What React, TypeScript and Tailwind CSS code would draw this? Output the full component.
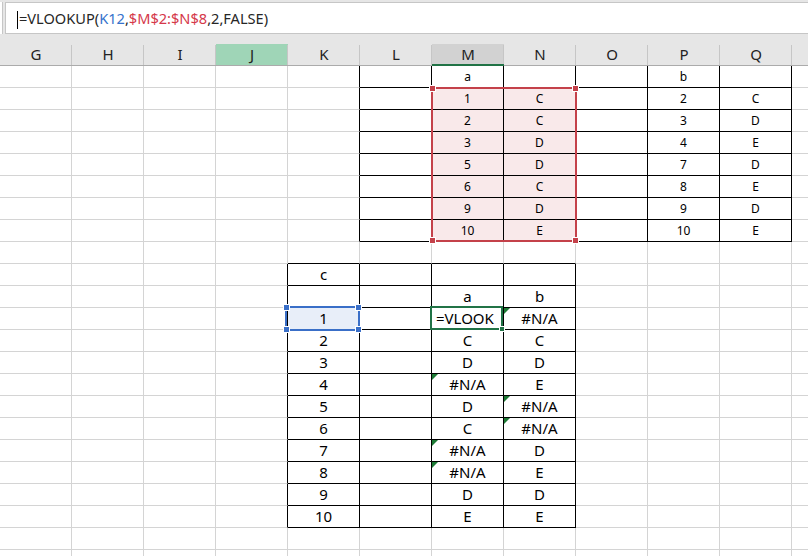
import React from 'react';

const COLS = ['G', 'H', 'I', 'J', 'K', 'L', 'M', 'N', 'O', 'P', 'Q', 'R'];
const ROW_COUNT = 23;

type Cell = { t: string; big?: boolean; tri?: boolean; left?: boolean };

const inTop = (c: number, r: number) => c >= 5 && c <= 10 && r >= 1 && r <= 8;
const inBottom = (c: number, r: number) => c >= 4 && c <= 7 && r >= 10 && r <= 21;
const ruled = (c: number, r: number) => inTop(c, r) || inBottom(c, r);

const cells: Record<string, Cell> = {};
const put = (col: string, row: number, t: string, big = false) => {
  const tri = t.startsWith('*');
  cells[`${col}${row}`] = { t: tri ? t.slice(1) : t, tri, big };
};

// lookup tables at the top
put('M', 1, 'a');
put('P', 1, 'b');
const mVals = ['1', '2', '3', '5', '6', '9', '10'];
const nVals = ['C', 'C', 'D', 'D', 'C', 'D', 'E'];
const pVals = ['2', '3', '4', '7', '8', '9', '10'];
const qVals = ['C', 'D', 'E', 'D', 'E', 'D', 'E'];
mVals.forEach((v, i) => {
  put('M', i + 2, v);
  put('N', i + 2, nVals[i]);
  put('P', i + 2, pVals[i]);
  put('Q', i + 2, qVals[i]);
});

// result table
put('K', 10, 'c', true);
put('M', 11, 'a', true);
put('N', 11, 'b', true);
const results = [
  ['1', '=VLOOK', '*#N/A'],
  ['2', 'C', 'C'],
  ['3', 'D', 'D'],
  ['4', '*#N/A', 'E'],
  ['5', 'D', '*#N/A'],
  ['6', 'C', '*#N/A'],
  ['7', '*#N/A', 'D'],
  ['8', '*#N/A', 'E'],
  ['9', 'D', 'D'],
  ['10', 'E', 'E'],
];
results.forEach(([k, m, n], i) => {
  put('K', i + 12, k, true);
  put('M', i + 12, m, true);
  put('N', i + 12, n, true);
});
cells['M12'].left = true;

const isPink = (c: number, r: number) => c >= 6 && c <= 7 && r >= 2 && r <= 8;

// little square handles sitting on the four corners of a highlighted range
const Handles = ({ color }: { color: string }) => (
  <>
    <span className={`absolute -left-[4px] -top-[4px] w-[7px] h-[7px] border border-white ${color}`} />
    <span className={`absolute -right-[4px] -top-[4px] w-[7px] h-[7px] border border-white ${color}`} />
    <span className={`absolute -left-[4px] -bottom-[4px] w-[7px] h-[7px] border border-white ${color}`} />
    <span className={`absolute -right-[4px] -bottom-[4px] w-[7px] h-[7px] border border-white ${color}`} />
  </>
);

export default function App() {
  return (
    <div
      className="relative w-[808px] h-[556px] overflow-hidden bg-white text-black"
      style={{ fontFamily: '"Noto Sans", "Open Sans", sans-serif' }}
    >
      {/* Formula bar */}
      <div className="h-[44px] bg-[#e6e6e6] pt-[2px] flex items-start">
        <div className="w-[3px] h-[32px] bg-white border-r border-[#c6c6c6]" />
        <div className="ml-[2px] flex-1 h-[32px] bg-white border border-r-0 border-[#c6c6c6] flex items-center pl-[11px]">
          <div className="w-px h-[18px] bg-black mt-[3px]" />
          <div className="text-[14.6px] text-[#262626] ml-px mt-[1px]">
            =VLOOKUP(<span className="text-[#3572cc]">K12</span>,
            <span className="text-[#d5384a]">$M$2:$N$8</span>,2,FALSE)
          </div>
        </div>
      </div>

      {/* Column headers */}
      <div className="flex h-[22px] bg-[#e6e6e6] border-b border-[#ababab]">
        {COLS.map((col) => {
          const sel = col === 'M';
          const hi = col === 'J';
          return (
            <div
              key={col}
              className={`relative w-[72px] shrink-0 flex items-center justify-center text-[15px] text-[#222] ${
                hi ? 'bg-[#9fd5b7]' : sel ? 'bg-[#d2d2d2] border-b-2 border-[#217346] -mb-px' : ''
              }`}
            >
              {col !== 'R' && col}
              <span className="absolute right-0 top-[1px] bottom-0 w-px bg-[#c6c6c6]" />
            </div>
          );
        })}
      </div>

      {/* Grid */}
      <div className="flex flex-col">
        {Array.from({ length: ROW_COUNT }, (_, i) => i + 1).map((r) => (
          <div key={r} className="flex">
            {COLS.map((col, c) => {
              const cell = cells[`${col}${r}`];
              const rightBlack = ruled(c, r) || ruled(c + 1, r);
              const bottomBlack = ruled(c, r) || ruled(c, r + 1);
              const bg = isPink(c, r) ? 'bg-[#f9e9ea]' : col === 'K' && r === 12 ? 'bg-[#e8eef9]' : '';
              return (
                <div
                  key={col}
                  className={`relative w-[72px] h-[22px] shrink-0 flex items-center border-r border-b ${
                    rightBlack ? 'border-r-black' : 'border-r-[#d4d4d4]'
                  } ${bottomBlack ? 'border-b-black' : 'border-b-[#d4d4d4]'} ${bg} ${
                    cell?.left ? 'justify-start pl-[4px]' : 'justify-center'
                  }`}
                >
                  {cell && (
                    <span className={cell.big ? 'text-[15px] leading-none' : 'text-[12px] leading-none'}>
                      {cell.t}
                    </span>
                  )}
                  {cell?.tri && (
                    <span className="absolute left-0 top-0 w-[6px] h-[6px] bg-[#1d7a35] [clip-path:polygon(0_0,100%_0,0_100%)]" />
                  )}
                </div>
              );
            })}
          </div>
        ))}
      </div>

      {/* Range highlight M2:N8 */}
      <div className="absolute left-[431px] top-[87px] w-[146px] h-[155px] border-2 border-[#c4414a]">
        <Handles color="bg-[#c4414a]" />
      </div>

      {/* Referenced cell K12 */}
      <div className="absolute left-[285px] top-[306px] w-[75px] h-[25px] border-2 border-[#3a6fc8]">
        <Handles color="bg-[#3a6fc8]" />
      </div>

      {/* Active cell M12 */}
      <div className="absolute left-[430px] top-[306px] w-[73px] h-[24px] border-2 border-[#217346]">
        <span className="absolute -right-[4px] -bottom-[4px] w-[6px] h-[6px] bg-[#217346] border border-white" />
      </div>
    </div>
  );
}
